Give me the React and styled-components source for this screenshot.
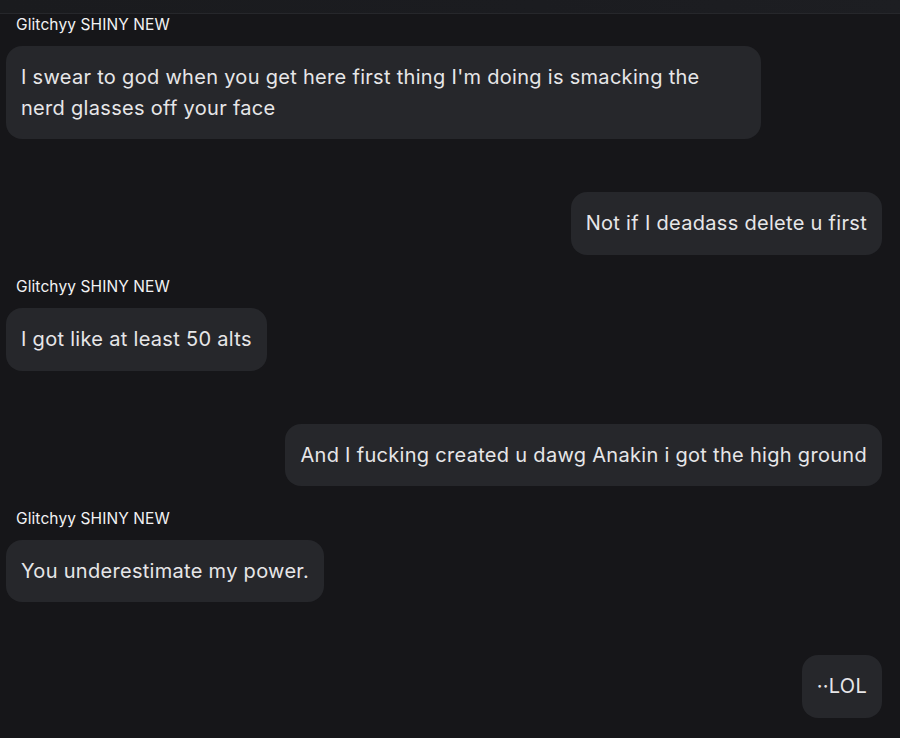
import React from "react";
import styled, { createGlobalStyle } from "styled-components";

const Global = createGlobalStyle`
  html, body { margin: 0; padding: 0; background: #161619; }
  body { font-family: Inter, "Noto Sans", sans-serif; -webkit-font-smoothing: antialiased; }
  #root { min-height: 738px; }
`;

const Page = styled.div`
  height: 738px;
  overflow: hidden;
  background: #161619;
  display: flex;
  flex-direction: column;
`;

const TopBar = styled.div`
  height: 13px;
  flex: none;
  background: linear-gradient(90deg, #1a1b1e 0%, #1b1c20 60%, #1d1e22 100%);
  border-bottom: 1px solid #26272b;
`;

const Thread = styled.div`
  display: flex;
  flex-direction: column;
  gap: 21.3px;
  padding: 0 18px 0 6px;
`;

const Group = styled.div`
  display: flex;
  flex-direction: column;
  align-items: ${(p) => (p.$self ? "flex-end" : "flex-start")};
`;

const Header = styled.div`
  height: 20px;
  margin-bottom: 12px;
  padding: 1px 0 0 10px;
  box-sizing: border-box;
  font-size: 15.5px;
  line-height: 20px;
  color: #f2f2f3;
  letter-spacing: 0.1px;
`;

const Bubble = styled.div`
  max-width: 755px;
  box-sizing: border-box;
  padding: 16px 15px;
  border-radius: 16px;
  background: #26272b;
  color: #e6e6e8;
  font-size: 20px;
  line-height: 30.5px;
  letter-spacing: 0.3px;
  white-space: pre-wrap;
`;

const messages = [
  { self: false, text: "I swear to god when you get here first thing I'm doing is smacking the nerd glasses off your face" },
  { self: true, text: "Not if I deadass delete u first" },
  { self: false, text: "I got like at least 50 alts" },
  { self: true, text: "And I fucking created u dawg Anakin i got the high ground" },
  { self: false, text: "You underestimate my power." },
  { self: true, text: "··LOL" },
];

export default function App() {
  return (
    <Page>
      <Global />
      <TopBar />
      <Thread>
        {messages.map((m, i) => (
          <Group key={i} $self={m.self}>
            <Header>{m.self ? "" : "Glitchyy SHINY NEW"}</Header>
            <Bubble>{m.text}</Bubble>
          </Group>
        ))}
      </Thread>
    </Page>
  );
}
